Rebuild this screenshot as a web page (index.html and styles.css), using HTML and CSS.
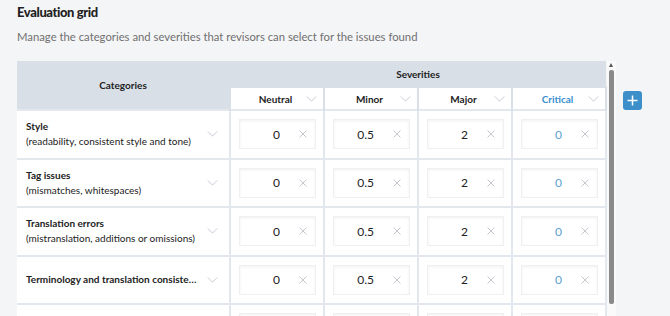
FILE: index.html
```html
<!DOCTYPE html>
<html lang="en">
<head>
  <meta charset="UTF-8" />
  <title>Evaluation grid</title>
  <link rel="stylesheet" href="styles.css">
</head>
<body>
  <main class="page">
    <h1 class="title">Evaluation grid</h1>
    <p class="subtitle">Manage the categories and severities that revisors can select for the issues found</p>

    <div class="grid-area">
      <div class="grid-scroll">
        <table class="grid">
          <colgroup>
            <col class="col-cat">
            <col class="col-sev">
            <col class="col-sev">
            <col class="col-sev">
            <col class="col-sev">
          </colgroup>
          <thead>
            <tr class="head-top">
              <th rowspan="2" class="head-cat">Categories</th>
              <th colspan="4" class="head-group">Severities</th>
            </tr>
            <tr class="head-sub">
              <th><div class="sev-head"><span>Neutral</span><svg class="chev" viewBox="0 0 12 7"><polyline points="0.5,0.5 6,6 11.5,0.5"/></svg></div></th>
              <th><div class="sev-head"><span>Minor</span><svg class="chev" viewBox="0 0 12 7"><polyline points="0.5,0.5 6,6 11.5,0.5"/></svg></div></th>
              <th><div class="sev-head"><span>Major</span><svg class="chev" viewBox="0 0 12 7"><polyline points="0.5,0.5 6,6 11.5,0.5"/></svg></div></th>
              <th><div class="sev-head critical"><span>Critical</span><svg class="chev" viewBox="0 0 12 7"><polyline points="0.5,0.5 6,6 11.5,0.5"/></svg></div></th>
            </tr>
          </thead>
          <tbody>
            <tr>
              <td><div class="cat"><div class="cat-text"><b>Style</b><span>(readability, consistent style and tone)</span></div><svg class="chev" viewBox="0 0 12 7"><polyline points="0.5,0.5 6,6 11.5,0.5"/></svg></div></td>
              <td><div class="num"><span class="val">0</span><svg class="clear" viewBox="0 0 8 8"><path d="M0.5 0.5l7 7M7.5 0.5l-7 7"/></svg></div></td>
              <td><div class="num"><span class="val">0.5</span><svg class="clear" viewBox="0 0 8 8"><path d="M0.5 0.5l7 7M7.5 0.5l-7 7"/></svg></div></td>
              <td><div class="num"><span class="val">2</span><svg class="clear" viewBox="0 0 8 8"><path d="M0.5 0.5l7 7M7.5 0.5l-7 7"/></svg></div></td>
              <td><div class="num critical"><span class="val">0</span><svg class="clear" viewBox="0 0 8 8"><path d="M0.5 0.5l7 7M7.5 0.5l-7 7"/></svg></div></td>
            </tr>
            <tr>
              <td><div class="cat"><div class="cat-text"><b>Tag issues</b><span>(mismatches, whitespaces)</span></div><svg class="chev" viewBox="0 0 12 7"><polyline points="0.5,0.5 6,6 11.5,0.5"/></svg></div></td>
              <td><div class="num"><span class="val">0</span><svg class="clear" viewBox="0 0 8 8"><path d="M0.5 0.5l7 7M7.5 0.5l-7 7"/></svg></div></td>
              <td><div class="num"><span class="val">0.5</span><svg class="clear" viewBox="0 0 8 8"><path d="M0.5 0.5l7 7M7.5 0.5l-7 7"/></svg></div></td>
              <td><div class="num"><span class="val">2</span><svg class="clear" viewBox="0 0 8 8"><path d="M0.5 0.5l7 7M7.5 0.5l-7 7"/></svg></div></td>
              <td><div class="num critical"><span class="val">0</span><svg class="clear" viewBox="0 0 8 8"><path d="M0.5 0.5l7 7M7.5 0.5l-7 7"/></svg></div></td>
            </tr>
            <tr>
              <td><div class="cat"><div class="cat-text"><b>Translation errors</b><span>(mistranslation, additions or omissions)</span></div><svg class="chev" viewBox="0 0 12 7"><polyline points="0.5,0.5 6,6 11.5,0.5"/></svg></div></td>
              <td><div class="num"><span class="val">0</span><svg class="clear" viewBox="0 0 8 8"><path d="M0.5 0.5l7 7M7.5 0.5l-7 7"/></svg></div></td>
              <td><div class="num"><span class="val">0.5</span><svg class="clear" viewBox="0 0 8 8"><path d="M0.5 0.5l7 7M7.5 0.5l-7 7"/></svg></div></td>
              <td><div class="num"><span class="val">2</span><svg class="clear" viewBox="0 0 8 8"><path d="M0.5 0.5l7 7M7.5 0.5l-7 7"/></svg></div></td>
              <td><div class="num critical"><span class="val">0</span><svg class="clear" viewBox="0 0 8 8"><path d="M0.5 0.5l7 7M7.5 0.5l-7 7"/></svg></div></td>
            </tr>
            <tr>
              <td><div class="cat"><div class="cat-text"><b class="ellipsis">Terminology and translation consistency</b></div><svg class="chev" viewBox="0 0 12 7"><polyline points="0.5,0.5 6,6 11.5,0.5"/></svg></div></td>
              <td><div class="num"><span class="val">0</span><svg class="clear" viewBox="0 0 8 8"><path d="M0.5 0.5l7 7M7.5 0.5l-7 7"/></svg></div></td>
              <td><div class="num"><span class="val">0.5</span><svg class="clear" viewBox="0 0 8 8"><path d="M0.5 0.5l7 7M7.5 0.5l-7 7"/></svg></div></td>
              <td><div class="num"><span class="val">2</span><svg class="clear" viewBox="0 0 8 8"><path d="M0.5 0.5l7 7M7.5 0.5l-7 7"/></svg></div></td>
              <td><div class="num critical"><span class="val">0</span><svg class="clear" viewBox="0 0 8 8"><path d="M0.5 0.5l7 7M7.5 0.5l-7 7"/></svg></div></td>
            </tr>
            <tr class="row-more">
              <td></td>
              <td><div class="num"></div></td>
              <td><div class="num"></div></td>
              <td><div class="num"></div></td>
              <td><div class="num"></div></td>
            </tr>
          </tbody>
        </table>
      </div>
      <div class="scrollbar">
        <span class="scroll-up"></span>
        <span class="scroll-thumb"></span>
      </div>
      <button class="add-btn" type="button">
        <svg viewBox="0 0 19 19"><path d="M9.5 4.5v10M4.5 9.5h10"/></svg>
      </button>
    </div>
  </main>
</body>
</html>
```

FILE: styles.css
```css
* {
  box-sizing: border-box;
}
html, body {
  margin: 0;
  height: 100%;
  overflow: hidden;
}
body {
  background: #f4f5f7;
  color: #222;
  font-family: "Lato", "Open Sans", sans-serif;
}
.page {
  padding: 0 0 0 17px;
}
.title {
  margin: 0;
  padding-top: 2px;
  font-size: 13px;
  line-height: 20px;
  letter-spacing: -0.4px;
  font-weight: 900;
  color: #1f1f1f;
}
.subtitle {
  margin: 6px 0 0;
  font-size: 11.3px;
  line-height: 18px;
  color: #707070;
}
.grid-area {
  display: flex;
  align-items: flex-start;
  margin-top: 15px;
}
.grid-scroll {
  width: 590px;
  height: 260px;
  overflow: hidden;
}
.grid {
  width: 590px;
  border-collapse: collapse;
  table-layout: fixed;
  font-size: 10px;
}
.col-cat {
  width: 213px;
}
.head-top th {
  background: #d9dfe7;
  height: 26px;
  font-weight: 700;
  color: #222;
}
.head-group {
  padding-top: 1px;
}
.head-sub th {
  background: #fff;
  height: 23px;
  border: 2px solid #d9dfe7;
  border-bottom: 0;
  padding: 0;
}
.sev-head {
  display: flex;
  align-items: center;
  justify-content: space-between;
  padding: 0 6px 0 0;
  font-weight: 700;
}
.sev-head span {
  flex: 1;
  text-align: center;
  padding-left: 14px;
}
.sev-head.critical span {
  color: #3a8fd0;
}
.chev {
  width: 11px;
  height: 6px;
  fill: none;
  stroke: #bcc2cb;
  stroke-width: 1;
  flex: none;
}
tbody td {
  background: #fff;
  height: 48.5px;
  border: 2px solid #e3e7ee;
  padding: 0 7px 0 8px;
}
tbody td:first-child {
  border-left: 0;
  padding: 0 11px 0 9px;
}
.cat {
  display: flex;
  align-items: center;
  justify-content: space-between;
  gap: 8px;
}
.cat-text {
  display: flex;
  flex-direction: column;
  min-width: 0;
  line-height: 15px;
}
.cat-text b {
  font-weight: 700;
}
.ellipsis {
  white-space: nowrap;
  overflow: hidden;
  text-overflow: ellipsis;
}
.num {
  display: flex;
  align-items: center;
  justify-content: flex-end;
  height: 30px;
  background: #fff;
  border: 1px solid #eef0f2;
  box-shadow: inset 0 1px 3px rgba(0, 0, 0, 0.06);
  font-size: 12px;
  color: #222;
  padding-right: 8px;
}
.num .val {
  margin-right: 19px;
}
.num .clear {
  width: 8px;
  height: 8px;
  fill: none;
  stroke: #c4c8ce;
  stroke-width: 1;
}
.num.critical .val {
  color: #5a9fd4;
}
.row-more td {
  vertical-align: top;
  padding-top: 8px;
}
.scrollbar {
  position: relative;
  width: 9px;
  height: 255px;
  background: #fafafa;
  flex: none;
}
.scroll-up {
  position: absolute;
  top: 2px;
  left: 2px;
  border-left: 2.5px solid transparent;
  border-right: 2.5px solid transparent;
  border-bottom: 4px solid #555;
}
.scroll-thumb {
  position: absolute;
  top: 9px;
  left: 2px;
  width: 5px;
  height: 234px;
  border-radius: 2px;
  background: #8a8a8a;
}
.add-btn {
  flex: none;
  width: 19px;
  height: 19px;
  margin: 30px 0 0 7px;
  padding: 0;
  border: 0;
  border-radius: 3px;
  background: #3d8fca;
}
.add-btn svg {
  display: block;
  width: 19px;
  height: 19px;
  fill: none;
  stroke: #fff;
  stroke-width: 1.5;
}
```
